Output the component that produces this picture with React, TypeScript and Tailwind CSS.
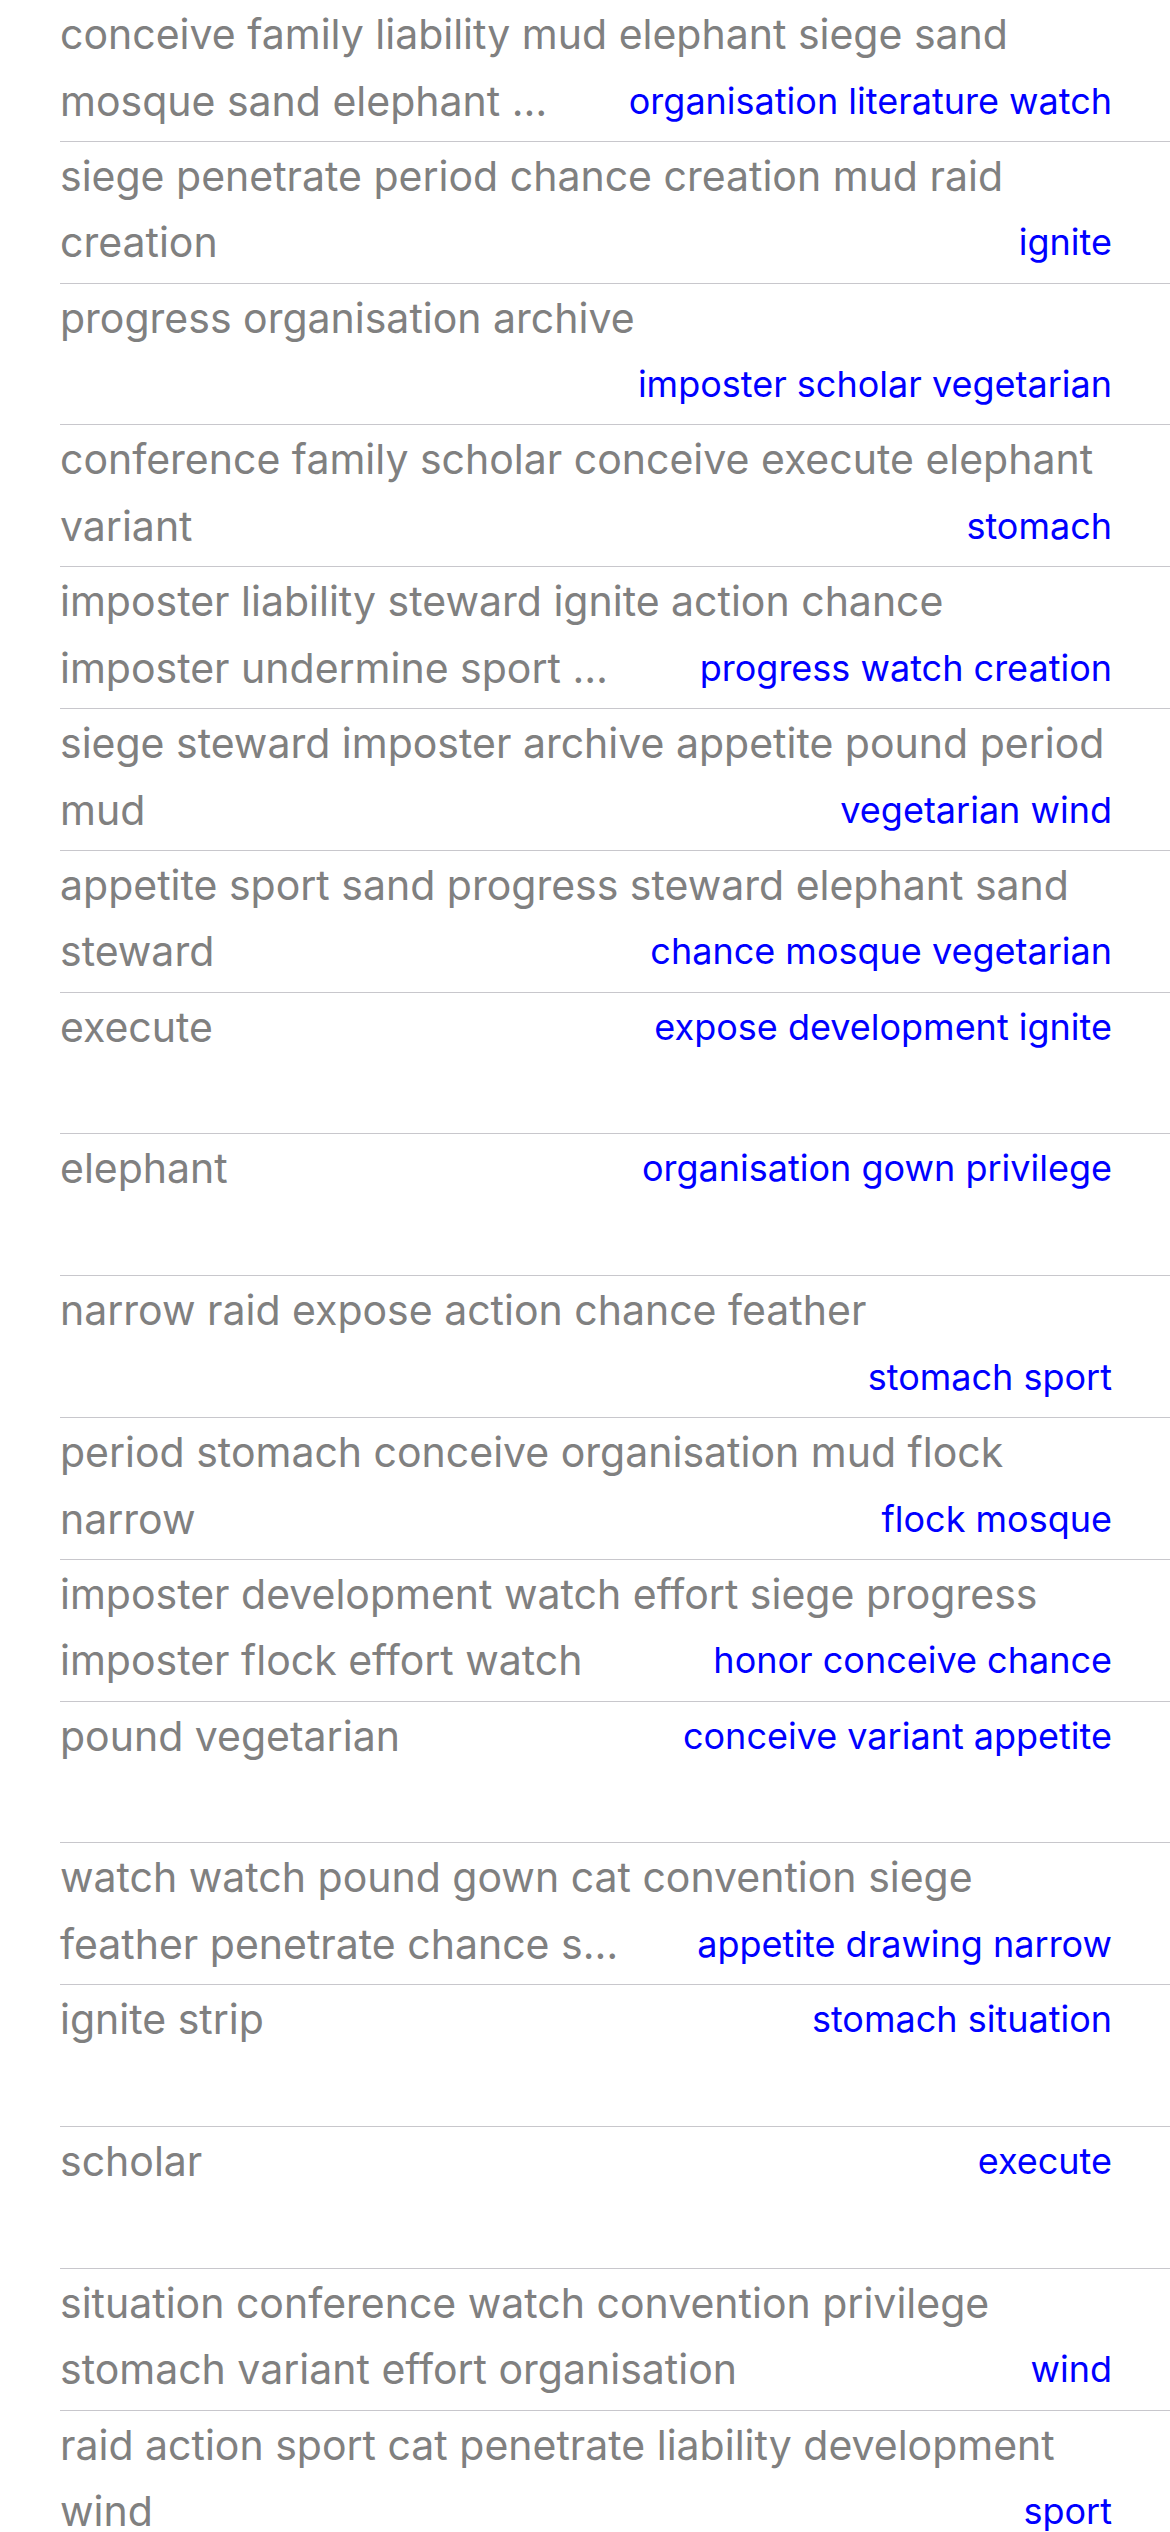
const rows: { lines: string[]; detail: string; detailLine: 0 | 1 }[] = [
  { lines: ['conceive family liability mud elephant siege sand', 'mosque sand elephant …'], detail: 'organisation literature watch', detailLine: 1 },
  { lines: ['siege penetrate period chance creation mud raid', 'creation'], detail: 'ignite', detailLine: 1 },
  { lines: ['progress organisation archive'], detail: 'imposter scholar vegetarian', detailLine: 1 },
  { lines: ['conference family scholar conceive execute elephant', 'variant'], detail: 'stomach', detailLine: 1 },
  { lines: ['imposter liability steward ignite action chance', 'imposter undermine sport …'], detail: 'progress watch creation', detailLine: 1 },
  { lines: ['siege steward imposter archive appetite pound period', 'mud'], detail: 'vegetarian wind', detailLine: 1 },
  { lines: ['appetite sport sand progress steward elephant sand', 'steward'], detail: 'chance mosque vegetarian', detailLine: 1 },
  { lines: ['execute'], detail: 'expose development ignite', detailLine: 0 },
  { lines: ['elephant'], detail: 'organisation gown privilege', detailLine: 0 },
  { lines: ['narrow raid expose action chance feather'], detail: 'stomach sport', detailLine: 1 },
  { lines: ['period stomach conceive organisation mud flock', 'narrow'], detail: 'flock mosque', detailLine: 1 },
  { lines: ['imposter development watch effort siege progress', 'imposter flock effort watch'], detail: 'honor conceive chance', detailLine: 1 },
  { lines: ['pound vegetarian'], detail: 'conceive variant appetite', detailLine: 0 },
  { lines: ['watch watch pound gown cat convention siege', 'feather penetrate chance s…'], detail: 'appetite drawing narrow', detailLine: 1 },
  { lines: ['ignite strip'], detail: 'stomach situation', detailLine: 0 },
  { lines: ['scholar'], detail: 'execute', detailLine: 0 },
  { lines: ['situation conference watch convention privilege', 'stomach variant effort organisation'], detail: 'wind', detailLine: 1 },
  { lines: ['raid action sport cat penetrate liability development', 'wind'], detail: 'sport', detailLine: 1 },
];

function Cell({ lines, detail, detailLine }: { lines: string[]; detail: string; detailLine: 0 | 1 }) {
  return (
    <div className="h-[141.8px] shrink-0 border-b border-[#c8c7cc] pr-[58px] pt-px">
      {[0, 1].map((i) => (
        <div key={i} className="flex h-[66.7px] items-start justify-between gap-4">
          <span className="whitespace-nowrap text-[41px] leading-[66.7px] text-[#808080]">{lines[i] ?? ''}</span>
          {detailLine === i && (
            <span className="whitespace-nowrap text-[36px] leading-[66.7px] text-[#0000ff]">{detail}</span>
          )}
        </div>
      ))}
    </div>
  );
}

export default function App() {
  return (
    <div
      className="h-[2532px] w-[1170px] overflow-hidden bg-white pl-[60px]"
      style={{ fontFamily: 'Inter, "Noto Sans", sans-serif' }}
    >
      <div className="flex flex-col">
        {rows.map((r, i) => (
          <Cell key={i} {...r} />
        ))}
      </div>
    </div>
  );
}
